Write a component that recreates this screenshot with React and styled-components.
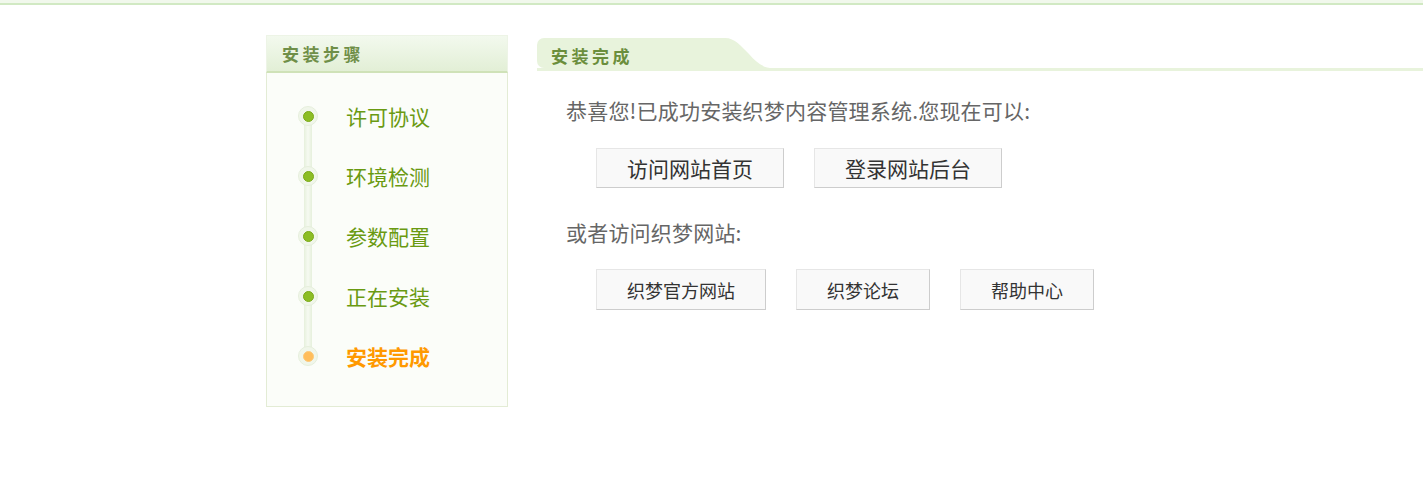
import styled, { createGlobalStyle } from 'styled-components';

const GlobalStyle = createGlobalStyle`
  body {
    margin: 0;
    background: #fff;
    font-family: "Microsoft YaHei", "Noto Sans CJK SC", "Noto Sans", sans-serif;
  }
`;

const TopBar = styled.div`
  height: 3px;
  background: #f1f8ec;
  border-bottom: 2px solid #d1e9c3;
`;

const Page = styled.div`
  display: flex;
  align-items: flex-start;
  gap: 29px;
  padding: 30px 0 0 266px;
`;

const Sidebar = styled.aside`
  width: 242px;
  flex-shrink: 0;
`;

const SideHeader = styled.div`
  box-sizing: border-box;
  height: 38px;
  padding-left: 15px;
  display: flex;
  align-items: center;
  background: linear-gradient(#f3f9ee, #e2efd6);
  border: 1px solid #edf4e6;
  border-bottom: 2px solid #cfe2b8;
  color: #6f8f48;
  font-size: 17px;
  font-weight: bold;
  letter-spacing: 3.5px;
`;

const StepList = styled.ul`
  position: relative;
  list-style: none;
  margin: 0;
  padding: 13px 0 20px;
  background: #fbfdf9;
  border: 1px solid #e3ecd5;
  border-top: none;

  &::before {
    content: '';
    position: absolute;
    left: 37px;
    top: 43px;
    height: 240px;
    width: 8px;
    background: linear-gradient(90deg, #e6f0dc, #f6faf2, #e6f0dc);
  }
`;

const Step = styled.li`
  position: relative;
  height: 60px;
  display: flex;
  align-items: center;
  padding-left: 31px;
  gap: 28px;
  font-size: 21px;
  color: ${(p) => (p.$active ? '#ff9900' : '#6a9a12')};
  font-weight: ${(p) => (p.$active ? 'bold' : 'normal')};
`;

const Dot = styled.span`
  box-sizing: border-box;
  width: 20px;
  height: 20px;
  border-radius: 50%;
  background: #f0f6ea;
  border: 1px solid #e6efdc;
  display: flex;
  align-items: center;
  justify-content: center;

  &::after {
    content: '';
    box-sizing: border-box;
    width: 11px;
    height: 11px;
    border-radius: 50%;
    background: ${(p) => (p.$active ? '#ffbd5a' : '#8cbd24')};
    border: 1px solid ${(p) => (p.$active ? '#fcc878' : '#7aa818')};
  }
`;

const Main = styled.main`
  flex: 1;
  padding-top: 3px;
`;

const MainHeader = styled.div`
  display: flex;
  align-items: flex-end;
  height: 30px;
  border-bottom: 3px solid #e8f3dc;
`;

const Tab = styled.div`
  height: 30px;
  width: 174px;
  padding-left: 14px;
  display: flex;
  align-items: center;
  padding-top: 4px;
  box-sizing: border-box;
  background: #e8f3dc;
  border-radius: 7px 0 0 7px;
  color: #6b8e3c;
  font-size: 17px;
  font-weight: bold;
  letter-spacing: 3.5px;
`;

const Slope = styled.svg`
  display: block;
  width: 62px;
  height: 30px;
`;

const Content = styled.div`
  padding: 24px 0 0 29px;
`;

const Para = styled.p`
  margin: 0;
  line-height: 30px;
  font-size: 21px;
  letter-spacing: 0.2px;
  color: #666;
`;

const ButtonRow = styled.div`
  display: flex;
  gap: 30px;
  margin: ${(p) => p.$margin};
  padding-left: 30px;
`;

const LinkButton = styled.a`
  box-sizing: border-box;
  width: ${(p) => p.$w}px;
  height: ${(p) => p.$h}px;
  display: flex;
  align-items: center;
  justify-content: center;
  background: #f9f9f9;
  border: 1px solid #e6e6e6;
  border-right-color: #cdcdcd;
  border-bottom-color: #cdcdcd;
  color: #333;
  font-size: ${(p) => p.$size}px;
  text-decoration: none;
  cursor: pointer;
`;

const steps = ['许可协议', '环境检测', '参数配置', '正在安装', '安装完成'];

export default function App() {
  return (
    <>
      <GlobalStyle />
      <TopBar />
      <Page>
        <Sidebar>
          <SideHeader>安装步骤</SideHeader>
          <StepList>
            {steps.map((s, i) => {
              const active = i === steps.length - 1;
              return (
                <Step key={s} $active={active}>
                  <Dot $active={active} />
                  {s}
                </Step>
              );
            })}
          </StepList>
        </Sidebar>
        <Main>
          <MainHeader>
            <Tab>安装完成</Tab>
            <Slope viewBox="0 0 62 30" preserveAspectRatio="none">
              <path d="M0 0 H14 C24 0 30 8 38 16 C46 25 52 30 62 30 H0 Z" fill="#e8f3dc" />
            </Slope>
          </MainHeader>
          <Content>
            <Para>恭喜您!已成功安装织梦内容管理系统.您现在可以:</Para>
            <ButtonRow $margin="23px 0 29px">
              <LinkButton $w={188} $h={40} $size={21}>访问网站首页</LinkButton>
              <LinkButton $w={188} $h={40} $size={21}>登录网站后台</LinkButton>
            </ButtonRow>
            <Para>或者访问织梦网站:</Para>
            <ButtonRow $margin="22px 0 0">
              <LinkButton $w={170} $h={41} $size={18}>织梦官方网站</LinkButton>
              <LinkButton $w={134} $h={41} $size={18}>织梦论坛</LinkButton>
              <LinkButton $w={134} $h={41} $size={18}>帮助中心</LinkButton>
            </ButtonRow>
          </Content>
        </Main>
      </Page>
    </>
  );
}
